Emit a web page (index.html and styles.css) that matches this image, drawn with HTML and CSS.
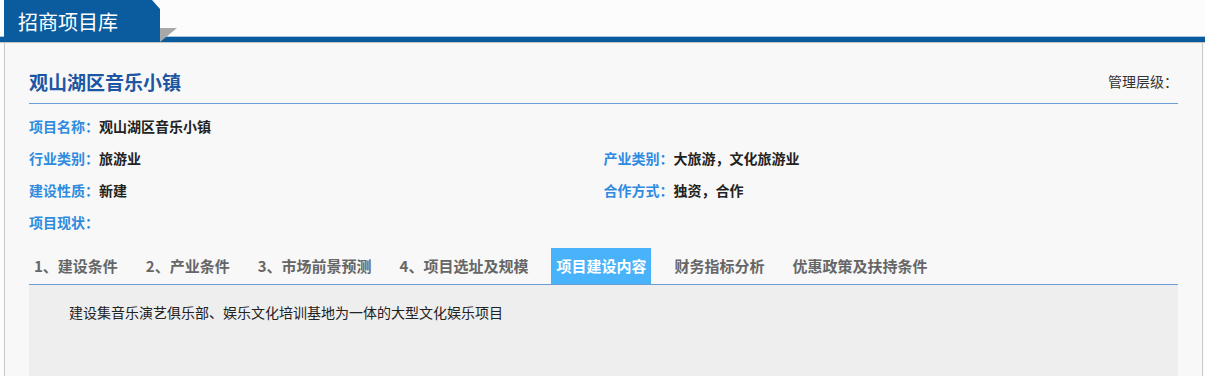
FILE: index.html
```html
<!DOCTYPE html>
<html lang="zh-CN">
<head>
  <meta charset="UTF-8">
  <meta name="viewport" content="width=device-width, initial-scale=1.0">
  <title>招商项目库</title>
  <link rel="stylesheet" href="styles.css">
</head>
<body>
  <div class="top">
    <div class="top-tab">招商项目库</div>
    <span class="top-fold"></span>
  </div>
  <div class="panel">
    <div class="title-row">
      <h1 class="title">观山湖区音乐小镇</h1>
      <span class="level">管理层级：</span>
    </div>
    <div class="fields">
      <div class="field full"><span class="label">项目名称：</span><span class="value">观山湖区音乐小镇</span></div>
      <div class="field"><span class="label">行业类别：</span><span class="value">旅游业</span></div>
      <div class="field"><span class="label">产业类别：</span><span class="value">大旅游，文化旅游业</span></div>
      <div class="field"><span class="label">建设性质：</span><span class="value">新建</span></div>
      <div class="field"><span class="label">合作方式：</span><span class="value">独资，合作</span></div>
      <div class="field full"><span class="label">项目现状：</span><span class="value"></span></div>
    </div>
    <div class="tabs">
      <span class="tab">1、建设条件</span>
      <span class="tab">2、产业条件</span>
      <span class="tab">3、市场前景预测</span>
      <span class="tab">4、项目选址及规模</span>
      <span class="tab active">项目建设内容</span>
      <span class="tab">财务指标分析</span>
      <span class="tab">优惠政策及扶持条件</span>
    </div>
    <div class="tab-body">
      <p>建设集音乐演艺俱乐部、娱乐文化培训基地为一体的大型文化娱乐项目</p>
    </div>
  </div>
</body>
</html>
```

FILE: styles.css
```css
*{
  margin: 0;
  padding: 0;
  box-sizing: border-box;
}
body{
  background: #fcfcfc;
  font-family: "Microsoft YaHei", "Noto Sans CJK SC", "Liberation Sans", sans-serif;
  font-size: 14px;
  color: #333;
}
.top{
  position: relative;
  height: 43px;
  padding-left: 4px;
  background: linear-gradient(to bottom, #fcfcfc 0, #fcfcfc 36px, #a9c6e0 36px, #a9c6e0 37px, #0b5c9e 37px, #0b5c9e 42px, #c4c4c4 42px, #c4c4c4 43px);
}
.top-tab{
  width: 156px;
  height: 42px;
  padding-left: 14px;
  background: #0b5c9e;
  color: #fff;
  font-size: 20px;
  line-height: 44px;
  clip-path: polygon(0 0, 148px 0, 156px 9px, 156px 100%, 0 100%);
}
.top-fold{
  position: absolute;
  left: 160px;
  top: 28px;
  width: 0;
  height: 0;
  border-top: 14px solid #a8a8a8;
  border-right: 17px solid transparent;
}
.panel{
  margin: 0 2px 0 4px;
  min-height: 333px;
  padding: 0 24px;
  background: #f8f8f8;
  border-left: 1px solid #c8c8c8;
  border-right: 1px solid #c8c8c8;
}
.title-row{
  display: flex;
  justify-content: space-between;
  align-items: center;
  height: 61px;
  padding-top: 16px;
  border-bottom: 1px solid #6a9fd6;
}
.title{
  font-size: 19px;
  font-weight: bold;
  color: #1d56a3;
}
.level{
  color: #333;
}
.fields{
  display: grid;
  grid-template-columns: 1fr 1fr;
  padding-top: 6px;
}
.field{
  line-height: 32px;
  height: 32px;
}
.field.full{
  grid-column: 1 / 3;
}
.label{
  color: #2f8be0;
  font-weight: bold;
}
.value{
  font-weight: bold;
  color: #222;
}
.tabs{
  display: flex;
  margin-top: 10px;
  border-bottom: 1px solid #6a9fd6;
}
.tab{
  padding: 0 5px;
  margin-right: 18px;
  height: 36px;
  line-height: 36px;
  font-size: 15px;
  font-weight: bold;
  color: #666;
}
.tab.active{
  background: #48b3fb;
  color: #fff;
}
.tab-body{
  background: #eeeeee;
  min-height: 100px;
  padding: 17px 12px;
}
.tab-body p{
  text-indent: 28px;
  line-height: 20px;
  color: #222;
}
```
